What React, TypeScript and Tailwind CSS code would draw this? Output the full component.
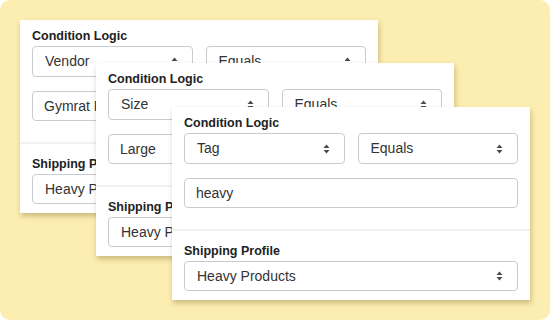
const cards = [
  { pos: "left-[20px] top-[20px]", field: "Vendor", op: "Equals", value: "Gymrat Products", profile: "Heavy Products" },
  { pos: "left-[96px] top-[63px]", field: "Size", op: "Equals", value: "Large", profile: "Heavy Products" },
  { pos: "left-[172px] top-[107px]", field: "Tag", op: "Equals", value: "heavy", profile: "Heavy Products" },
];

function Arrows() {
  return (
    <svg width="7" height="10" viewBox="0 0 7 10" className="absolute right-[14px] top-1/2 -translate-y-1/2">
      <path d="M3.5 0.5 L6.5 4 L0.5 4 Z" fill="#4a4a4a" />
      <path d="M3.5 9.5 L6.5 6 L0.5 6 Z" fill="#4a4a4a" />
    </svg>
  );
}

function Select({ value, h = "h-[31px]" }: { value: string; h?: string }) {
  return (
    <div className={`relative flex-1 ${h} flex items-center pl-[12px] pr-8 rounded-[4px] border border-[#c9cccf] bg-white text-[14px] text-[#333333] whitespace-nowrap overflow-hidden`}>
      {value}
      <Arrows />
    </div>
  );
}

function Card({ pos, field, op, value, profile }: (typeof cards)[number]) {
  return (
    <div className={`absolute ${pos} w-[358px] bg-white shadow-[1px_3px_5px_rgba(90,70,0,0.3)]`}>
      <div className="px-3 pt-[7px] pb-[21px]">
        <div className="text-[12.5px] font-bold leading-[19px] text-[#202223]">Condition Logic</div>
        <div className="flex gap-[13px]">
          <Select value={field} />
          <Select value={op} />
        </div>
        <div className="mt-[14px] h-[30px] flex items-center px-[11px] rounded-[4px] border border-[#c9cccf] text-[14px] text-[#333333] whitespace-nowrap overflow-hidden">
          {value}
        </div>
      </div>
      <div className="border-t-2 border-[#f1f1f1] px-3 pt-[11px] pb-[9px]">
        <div className="text-[12.5px] font-bold leading-[19px] text-[#202223]">Shipping Profile</div>
        <div className="flex">
          <Select value={profile} h="h-[30px]" />
        </div>
      </div>
    </div>
  );
}

export default function App() {
  return (
    <div className="w-[550px] h-[320px] bg-white" style={{ fontFamily: "'Liberation Sans', Arial, sans-serif" }}>
      <div className="relative w-full h-full rounded-[10px] bg-[#fcedb0] overflow-hidden">
        {cards.map((c) => (
          <Card key={c.field} {...c} />
        ))}
      </div>
    </div>
  );
}
